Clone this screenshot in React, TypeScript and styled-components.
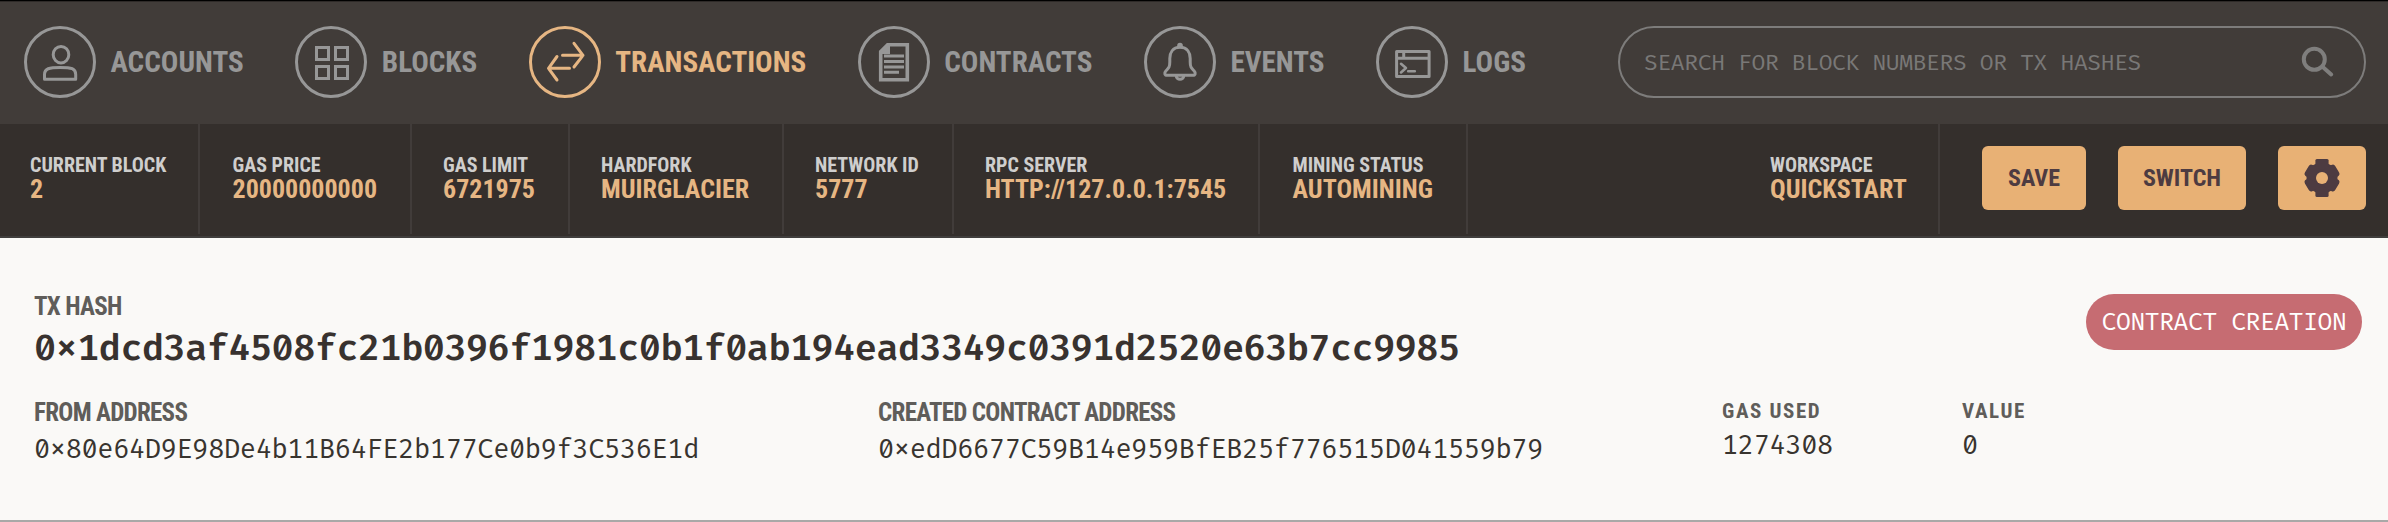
import React from 'react';
import styled, { createGlobalStyle } from 'styled-components';

const colors = {
  nav: '#413c39',
  bar: '#342f2c',
  divider: '#413c3a',
  muted: '#979797',
  accent: '#e6b683',
  button: '#e8b175',
  buttonText: '#4d3b41',
  page: '#faf9f7',
};

const condensed = "'Roboto Condensed', Roboto, 'Liberation Sans', sans-serif";
const mono = "'Fira Code', 'Fira Mono', 'Noto Sans Mono', 'DejaVu Sans Mono', monospace";

const GlobalStyle = createGlobalStyle`
  *, *::before, *::after { box-sizing: border-box; }
  body { margin: 0; background: ${colors.page}; font-family: ${condensed}; }
`;

const Page = styled.div`
  width: 2388px;
  height: 522px;
  display: flex;
  flex-direction: column;
  overflow: hidden;
  background: ${colors.page};
`;

const NavBar = styled.header`
  height: 124px;
  padding: 24px 22px 0 24px;
  display: flex;
  align-items: flex-start;
  justify-content: space-between;
  background: ${colors.nav};
  border-top: 1px solid #000;
  box-shadow: inset 0 1px 0 #2e2a28;
`;

const NavList = styled.nav`
  display: flex;
  gap: 51.5px;
  padding-top: 1px;
`;

const NavItem = styled.a<{ $active?: boolean }>`
  display: flex;
  align-items: center;
  gap: 14.5px;
  height: 72px;
  color: ${p => (p.$active ? colors.accent : colors.muted)};
`;

const NavIcon = styled.svg`
  width: 72px;
  height: 72px;
  display: block;
  flex: none;
  fill: none;
  stroke: currentColor;
  stroke-width: 3;
`;

const NavLabel = styled.span`
  font-size: 29.15px;
  font-weight: 700;
  line-height: 72px;
  white-space: nowrap;
`;

const SearchBox = styled.div`
  width: 748px;
  height: 72px;
  margin-top: 1px;
  padding: 0 28px 0 24px;
  display: flex;
  align-items: center;
  justify-content: space-between;
  border: 2px solid #7d7c7b;
  border-radius: 36px;
  color: #7f7e7d;
`;

const SearchHint = styled.span`
  padding-top: 2px;
  font: 400 22.4px/66px ${mono};
  letter-spacing: -0.0154em;
  color: #797877;
  white-space: pre;
`;

const SearchIcon = styled.svg`
  width: 36px;
  height: 36px;
  fill: none;
  stroke: currentColor;
  stroke-width: 4;
  stroke-linecap: round;
`;

const StatusBar = styled.section`
  height: 114px;
  display: flex;
  justify-content: space-between;
  background: ${colors.bar};
  border-bottom: 2px solid #403e3d;
`;

const StatusGroup = styled.div`
  display: flex;
  height: 110px;
`;

const StatusItem = styled.div<{ $width: number; $inset: number }>`
  width: ${p => p.$width}px;
  padding: 31px 0 0 ${p => p.$inset}px;
  border-right: 2px solid ${colors.divider};
  white-space: nowrap;
`;

const StatusLabel = styled.div`
  font-size: 20px;
  font-weight: 700;
  line-height: 20px;
  color: #cfcecd;
`;

const StatusValue = styled.div`
  font-size: 26px;
  font-weight: 700;
  line-height: 28px;
  color: ${colors.accent};
`;

const Actions = styled.div`
  display: flex;
  gap: 32px;
  padding: 22px 22px 0 42px;
`;

const ActionButton = styled.button<{ $width: number }>`
  width: ${p => p.$width}px;
  height: 64px;
  padding: 0;
  display: flex;
  align-items: center;
  justify-content: center;
  border: 0;
  border-radius: 6px;
  background: ${colors.button};
  color: ${colors.buttonText};
  font: 700 24px/64px ${condensed};
`;

const GearIcon = styled.svg`
  width: 38px;
  height: 38px;
  fill: currentColor;
`;

const Details = styled.main`
  height: 284px;
  padding: 56px 26px 0 34px;
  border-bottom: 2px solid #a9a8a7;
`;

const HashRow = styled.div`
  display: flex;
  justify-content: space-between;
  align-items: flex-start;
  height: 107px;
`;

const HashField = styled.div`
  padding-top: 1px;
`;

const FieldLabel = styled.div<{ $small?: boolean }>`
  font-size: ${p => (p.$small ? 21 : 25)}px;
  font-weight: 700;
  line-height: ${p => (p.$small ? 21 : 24)}px;
  letter-spacing: ${p => (p.$small ? 1.6 : -0.72)}px;
  color: #5f5d5a;
  white-space: nowrap;
`;

const Hash = styled.div`
  margin-top: 8px;
  font: 600 36px/44px ${mono};
  letter-spacing: -0.0154em;
  font-feature-settings: 'calt' 1;
  color: #38322f;
`;

const Tag = styled.div`
  width: 276px;
  height: 56px;
  border-radius: 28px;
  background: #c66c72;
  color: #fff;
  font: 400 24px/57px ${mono};
  letter-spacing: -0.0154em;
  text-align: center;
  white-space: pre;
`;

const FieldRow = styled.div`
  display: grid;
  grid-template-columns: 844px 844px 240px 1fr;
`;

const FieldValue = styled.div<{ $small?: boolean }>`
  margin-top: ${p => (p.$small ? 8 : 9)}px;
  font: 400 26.4px/32px ${mono};
  letter-spacing: -0.0154em;
  font-feature-settings: 'calt' 1;
  color: #38342f;
`;

const rim = <circle cx="36" cy="36" r="34.5" />;

const navItems = [
  {
    label: 'ACCOUNTS',
    icon: (
      <g strokeLinejoin="round">
        <ellipse cx="37" cy="28.7" rx="7.8" ry="8.3" />
        <path d="M20.5 53.3V48.5C20.5 42.6 25 41.4 36.3 41.4S51.7 42.6 51.7 48.5V53.3Z" />
      </g>
    ),
  },
  {
    label: 'BLOCKS',
    icon: <path d="M21.5 21.5h12v12h-12zM40.5 21.5h12v12h-12zM21.5 40.5h12v12h-12zM40.5 40.5h12v12h-12z" />,
  },
  {
    label: 'TRANSACTIONS',
    active: true,
    icon: (
      <path
        strokeLinecap="round"
        strokeLinejoin="round"
        d="M33.5 29.3H54M45 17.3L54 29.3L45 41M40.5 42.3H19.5M28 30.5L19.5 42.3L28 54"
      />
    ),
  },
  {
    label: 'CONTRACTS',
    icon: (
      <g>
        <path d="M22.7 26L30 18.7H49.3V53.8H22.7Z" strokeWidth="3.6" />
        <path d="M21 25L29 17H32V28H21Z" fill="currentColor" stroke="none" />
        <path d="M26 30H46M26 35.5H46M26 41H46M26 46.3H41" />
      </g>
    ),
  },
  {
    label: 'EVENTS',
    icon: (
      <g strokeLinejoin="round">
        <circle cx="36" cy="19.5" r="2.8" fill="currentColor" stroke="none" />
        <path d="M36 21.3C28.5 21.3 25.8 27 25.8 32.5V36C25.8 41.5 24.5 42.3 22 44.8C20 47 20.5 49.3 23.2 49.3H48.8C51.5 49.3 52 47 50 44.8C47.5 42.3 46.2 41.5 46.2 36V32.5C46.2 27 43.5 21.3 36 21.3Z" />
        <path d="M32.2 49.5C32.2 54.5 39.8 54.5 39.8 49.5" />
      </g>
    ),
  },
  {
    label: 'LOGS',
    icon: (
      <g strokeLinejoin="round">
        <path d="M20.6 25.5H53.1V50.5H20.6ZM20.6 32.2H53.1M27.7 25.5V32" />
        <path d="M25 37.8L30 42L25 46.4M32.2 45.2H38.8" strokeWidth="2.6" strokeLinecap="round" />
      </g>
    ),
  },
];

const statusItems = [
  { label: 'CURRENT BLOCK', value: '2', width: 200, inset: 30 },
  { label: 'GAS PRICE', value: '20000000000', width: 212, inset: 32.5 },
  { label: 'GAS LIMIT', value: '6721975', width: 158, inset: 31 },
  { label: 'HARDFORK', value: 'MUIRGLACIER', width: 214, inset: 31 },
  { label: 'NETWORK ID', value: '5777', width: 170, inset: 31 },
  { label: 'RPC SERVER', value: 'HTTP://127.0.0.1:7545', width: 306, inset: 31 },
  { label: 'MINING STATUS', value: 'AUTOMINING', width: 208, inset: 32.5 },
];

const fields = [
  { label: 'FROM ADDRESS', value: '0x80e64D9E98De4b11B64FE2b177Ce0b9f3C536E1d' },
  { label: 'CREATED CONTRACT ADDRESS', value: '0xedD6677C59B14e959BfEB25f776515D041559b79' },
  { label: 'GAS USED', value: '1274308', small: true },
  { label: 'VALUE', value: '0', small: true },
];

const gearTeeth = [
  { angle: 0, length: 38, radius: 1.5 },
  { angle: 60, length: 35, radius: 3 },
  { angle: 120, length: 35, radius: 3 },
];

export default function App() {
  return (
    <Page>
      <GlobalStyle />
      <NavBar>
        <NavList>
          {navItems.map(item => (
            <NavItem key={item.label} $active={item.active}>
              <NavIcon viewBox="0 0 72 72">
                {rim}
                {item.icon}
              </NavIcon>
              <NavLabel>{item.label}</NavLabel>
            </NavItem>
          ))}
        </NavList>
        <SearchBox>
          <SearchHint>SEARCH FOR BLOCK NUMBERS OR TX HASHES</SearchHint>
          <SearchIcon viewBox="0 0 36 36">
            <circle cx="14.3" cy="15.3" r="10.5" />
            <path d="M22.5 22.8L31.2 30.5" />
          </SearchIcon>
        </SearchBox>
      </NavBar>

      <StatusBar>
        <StatusGroup>
          {statusItems.map(item => (
            <StatusItem key={item.label} $width={item.width} $inset={item.inset}>
              <StatusLabel>{item.label}</StatusLabel>
              <StatusValue>{item.value}</StatusValue>
            </StatusItem>
          ))}
        </StatusGroup>
        <StatusGroup>
          <StatusItem $width={202} $inset={32}>
            <StatusLabel>WORKSPACE</StatusLabel>
            <StatusValue>QUICKSTART</StatusValue>
          </StatusItem>
          <Actions>
            <ActionButton $width={104}>SAVE</ActionButton>
            <ActionButton $width={128}>SWITCH</ActionButton>
            <ActionButton $width={88} aria-label="Settings">
              <GearIcon viewBox="0 0 38 38">
                <circle cx="19" cy="19" r="15.5" />
                {gearTeeth.map(tooth => (
                  <rect
                    key={tooth.angle}
                    x="12.4"
                    y={19 - tooth.length / 2}
                    width="13.2"
                    height={tooth.length}
                    rx={tooth.radius}
                    transform={`rotate(${tooth.angle} 19 19)`}
                  />
                ))}
                <circle cx="19" cy="19" r="6" fill={colors.button} />
              </GearIcon>
            </ActionButton>
          </Actions>
        </StatusGroup>
      </StatusBar>

      <Details>
        <HashRow>
          <HashField>
            <FieldLabel>TX HASH</FieldLabel>
            <Hash>0x1dcd3af4508fc21b0396f1981c0b1f0ab194ead3349c0391d2520e63b7cc9985</Hash>
          </HashField>
          <Tag>CONTRACT CREATION</Tag>
        </HashRow>
        <FieldRow>
          {fields.map(field => (
            <div key={field.label}>
              <FieldLabel $small={field.small}>{field.label}</FieldLabel>
              <FieldValue $small={field.small}>{field.value}</FieldValue>
            </div>
          ))}
        </FieldRow>
      </Details>
    </Page>
  );
}
